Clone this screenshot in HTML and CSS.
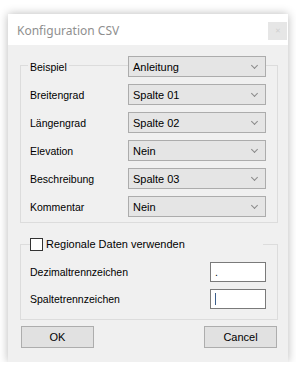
FILE: index.html
```html
<!DOCTYPE html>
<html lang="de">
  <head>
    <meta charset="UTF-8" />
    <meta name="viewport" content="width=device-width, initial-scale=1.0" />
    <title>Konfiguration CSV</title>
    <link rel="stylesheet" href="styles.css">
  </head>
  <body>
    <div class="dialog">
      <div class="titlebar">
        <span class="title">Konfiguration CSV</span>
        <span class="close">&#x2715;</span>
      </div>
      <div class="dialog-body">
        <div class="group group-columns">
          <div class="row row-legend">
            <span class="label legend-label">Beispiel</span>
            <div class="combo"><span>Anleitung</span><span class="chevron"></span></div>
          </div>
          <div class="row">
            <span class="label">Breitengrad</span>
            <div class="combo"><span>Spalte 01</span><span class="chevron"></span></div>
          </div>
          <div class="row">
            <span class="label">Längengrad</span>
            <div class="combo"><span>Spalte 02</span><span class="chevron"></span></div>
          </div>
          <div class="row">
            <span class="label">Elevation</span>
            <div class="combo"><span>Nein</span><span class="chevron"></span></div>
          </div>
          <div class="row">
            <span class="label">Beschreibung</span>
            <div class="combo"><span>Spalte 03</span><span class="chevron"></span></div>
          </div>
          <div class="row">
            <span class="label">Kommentar</span>
            <div class="combo"><span>Nein</span><span class="chevron"></span></div>
          </div>
        </div>

        <div class="group group-regional">
          <label class="check-legend">
            <span class="checkbox"></span>
            <span>Regionale Daten verwenden</span>
          </label>
          <div class="row row-text">
            <span class="label">Dezimaltrennzeichen</span>
            <div class="textbox">.</div>
          </div>
          <div class="row row-text">
            <span class="label">Spaltetrennzeichen</span>
            <div class="textbox"><span class="caret"></span></div>
          </div>
        </div>

        <div class="buttons">
          <button class="btn">OK</button>
          <button class="btn">Cancel</button>
        </div>
      </div>
    </div>
  </body>
</html>
```

FILE: styles.css
```css
* {
  box-sizing: border-box;
}
body {
  margin: 0;
  background-color: #ffffff;
  font-family: "Liberation Sans", Arial, sans-serif;
  font-size: 10.5px;
  color: #000000;
}
.dialog {
  width: 280px;
  height: 348px;
  margin: 14px 0 0 8px;
  background-color: #f0f0f0;
  box-shadow: 0 0 9px rgba(0, 0, 0, 0.28);
}
.titlebar {
  height: 31px;
  background-color: #ffffff;
  display: flex;
  align-items: flex-start;
  justify-content: space-between;
}
.title {
  font-family: "Noto Sans", "Open Sans", sans-serif;
  font-size: 12px;
  color: #8f8f8f;
  padding: 8px 0 0 9px;
}
.close {
  width: 19px;
  height: 18px;
  margin: 8px 1px 0 0;
  background-color: #e6e6e6;
  color: #d0d0d0;
  font-size: 7px;
  line-height: 18px;
  text-align: center;
}
.dialog-body {
  padding: 20px 10px 0 12px;
}
.group {
  border: 1px solid #dcdcdc;
  padding: 0 11px 0 9px;
}
.group-columns {
  display: flex;
  flex-direction: column;
  gap: 7px;
  padding-bottom: 5px;
}
.row {
  display: flex;
  align-items: center;
  justify-content: space-between;
}
.row-legend {
  margin-top: -10px;
}
.legend-label {
  background-color: #f0f0f0;
  padding: 0 2px;
  margin-left: -2px;
}
.combo {
  width: 138px;
  height: 21px;
  border: 1px solid #acacac;
  background-color: #e5e5e5;
  display: flex;
  align-items: center;
  justify-content: space-between;
  padding-left: 4px;
  font-size: 11px;
}
.chevron {
  width: 5px;
  height: 5px;
  border-right: 1px solid #8a8a8a;
  border-bottom: 1px solid #8a8a8a;
  transform: rotate(45deg);
  margin: 0 8px 3px 0;
}
.group-regional {
  margin-top: 21px;
  padding-bottom: 10px;
}
.check-legend {
  display: flex;
  align-items: center;
  gap: 3px;
  width: 233px;
  height: 14px;
  margin-top: -8px;
  background-color: #f0f0f0;
  font-size: 11px;
}
.checkbox {
  width: 13px;
  height: 13px;
  border: 1px solid #333333;
  background-color: #ffffff;
}
.row-text {
  margin-top: 7px;
}
.check-legend + .row-text {
  margin-top: 11px;
}
.textbox {
  width: 56px;
  height: 20px;
  border: 1px solid #7a7a7a;
  background-color: #ffffff;
  padding-left: 4px;
  line-height: 18px;
}
.caret {
  display: inline-block;
  width: 1px;
  height: 12px;
  margin-top: 3px;
  background-color: #3c5f8c;
}
.buttons {
  display: flex;
  justify-content: space-between;
  padding: 6px 1px 0 1px;
}
.btn {
  width: 73px;
  height: 22px;
  border: 1px solid #adadad;
  background-color: #e1e1e1;
  font-family: "Liberation Sans", Arial, sans-serif;
  font-size: 11px;
  color: #000000;
  padding: 0;
}
```
